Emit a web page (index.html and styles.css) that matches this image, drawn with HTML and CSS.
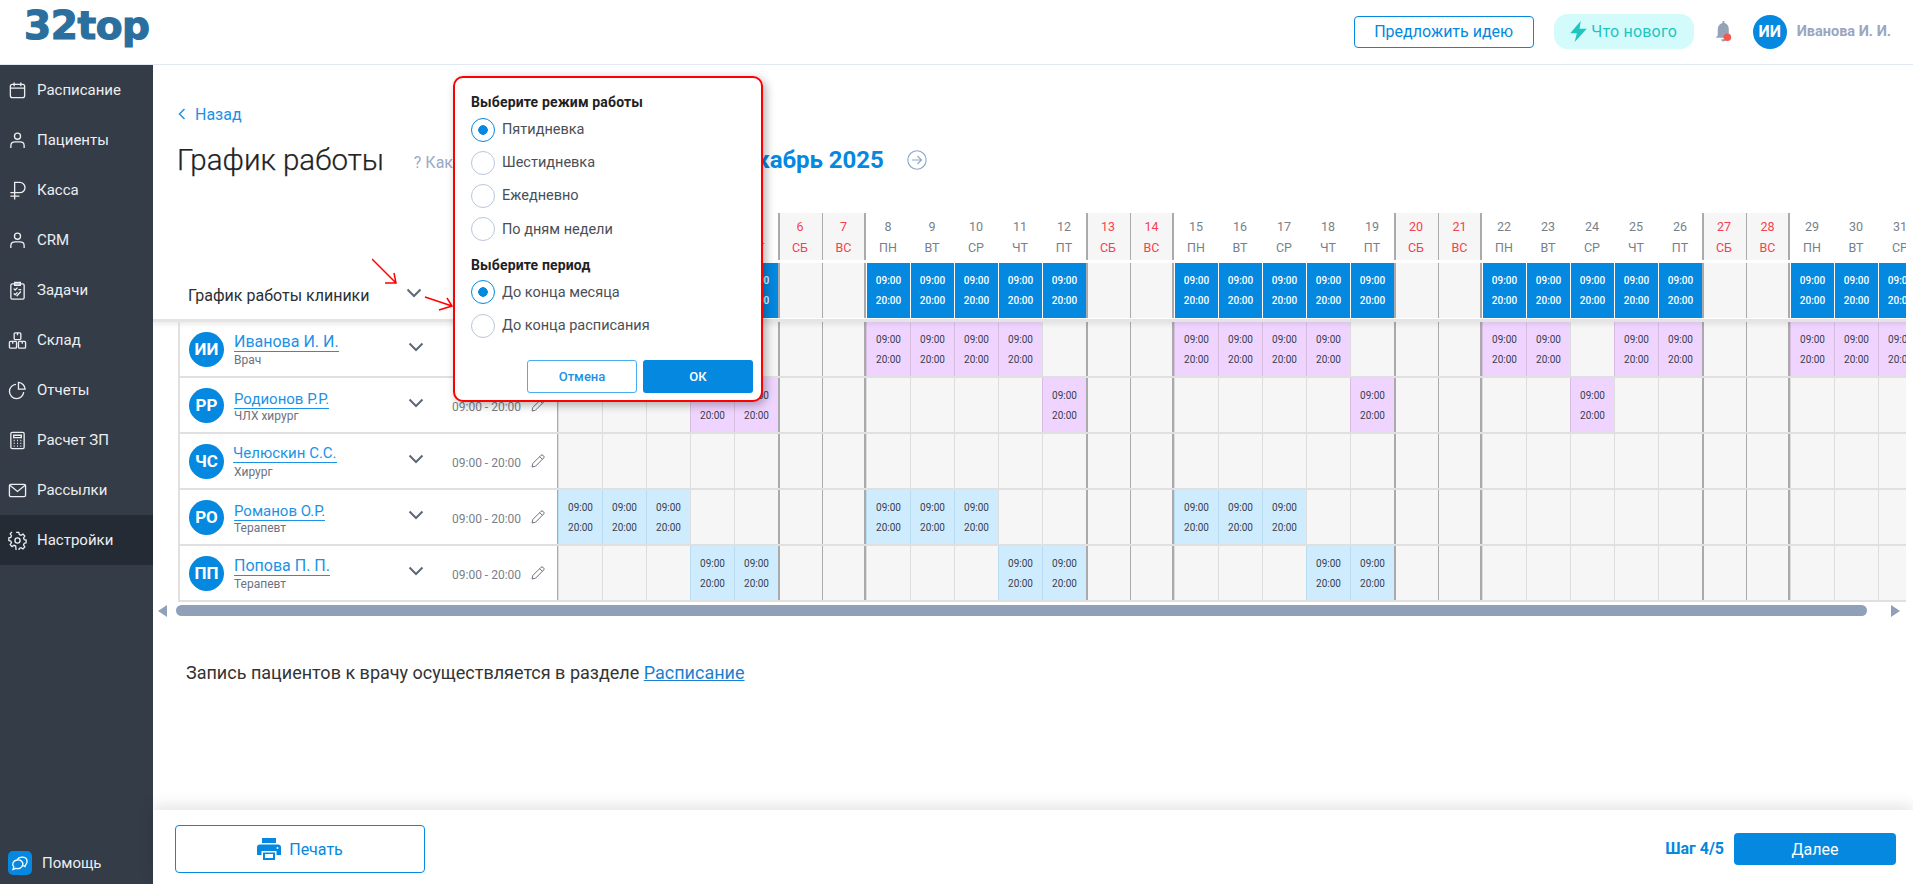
FILE: index.html
```html
<!DOCTYPE html>
<html lang="ru">
<head>
<meta charset="utf-8">
<title>График работы</title>
<link rel="stylesheet" href="styles.css">
</head>
<body>
<div class="page">
<header class="topbar">
  <div class="logo">32top</div>
  <div class="top-actions">
    <a class="idea">Предложить идею</a>
    <a class="news"><svg width="17" height="21" viewBox="0 0 15 19"><path d="M9.500 0 0 11h6l-2 8 11-12H8.500z" fill="#20c5c0"/></svg>Что нового</a>
    <span class="bell"><svg width="19" height="23" viewBox="0 0 18 24"><path d="M8 1h2v2c3 .7 4.500 3.300 4.500 6.500V16l2 2.500H1L3 16V9.500C3 6.300 5 3.700 8 3zM6.500 20h5a2.500 2.500 0 0 1-5 0z" fill="#94a3b8"/><circle cx="13" cy="18" r="4" fill="#f4574e"/></svg></span>
    <span class="top-avatar">ИИ</span>
    <span class="top-name">Иванова И. И.</span>
  </div>
</header>
<div class="body">
<nav class="sidebar">
  <a class="nav"><svg viewBox="0 0 20 20"><rect x="2.500" y="3.500" width="15" height="14" rx="2"/><path d="M2.500 7.500h15M6.500 1.500v4M13.500 1.500v4"/></svg>Расписание</a>
  <a class="nav"><svg viewBox="0 0 20 20"><circle cx="10" cy="5.500" r="3.200"/><path d="M3 18v-2.500C3 13 5 11.500 7.500 11.500h5c2.500 0 4.500 1.500 4.500 4V18"/></svg>Пациенты</a>
  <a class="nav"><svg viewBox="0 0 20 20"><path d="M7 19.500V1.500h5.500a5.200 5.200 0 0 1 0 10.800H2.500M2.500 16H12"/></svg>Касса</a>
  <a class="nav"><svg viewBox="0 0 20 20"><circle cx="10" cy="5.500" r="3.200"/><path d="M3 18v-2.500C3 13 5 11.500 7.500 11.500h5c2.500 0 4.500 1.500 4.500 4V18"/></svg>CRM</a>
  <a class="nav"><svg viewBox="0 0 20 20"><rect x="3" y="3" width="14" height="16" rx="1.500"/><path d="M7 1.500h6v3H7zM6 8l1.500 1.500L10 7M6 13l1.500 1.500L10 12M11 9h3M13.500 11 9 16"/></svg>Задачи</a>
  <a class="nav"><svg viewBox="0 0 20 20"><rect x="6.500" y="2" width="7" height="7" rx="1"/><rect x="1.500" y="11" width="7.500" height="7" rx="1"/><rect x="11" y="11" width="7.500" height="7" rx="1"/><path d="M10 2v2.500M5 11v2.500M15 11v2.500"/></svg>Склад</a>
  <a class="nav"><svg viewBox="0 0 20 20"><path d="M8.500 3.500a7.500 7.500 0 1 0 8 8M8.500 3.500"/><path d="M11 1.500a7.500 7.500 0 0 1 7 7h-7z"/></svg>Отчеты</a>
  <a class="nav"><svg viewBox="0 0 20 20"><rect x="3" y="1.500" width="14" height="17" rx="1.500"/><path d="M6 4.500h8v2.500H6zM6 10h1M9.500 10h1M13 10h1M6 13h1M9.500 13h1M13 13h1M6 16h1M9.500 16h1M13 16h1"/></svg>Расчет ЗП</a>
  <a class="nav"><svg viewBox="0 0 20 20"><rect x="1.500" y="3.500" width="17" height="13" rx="1.500"/><path d="m2 4.500 8 6.500 8-6.500"/></svg>Рассылки</a>
  <a class="nav active"><svg viewBox="0 0 20 20"><circle cx="10" cy="10" r="2.700"/><path d="M8.500 1.500h3l.5 2.500 1.800.8 2.200-1.400 2 2.200-1.400 2.100.8 1.800 2.100.5v3l-2.100.5-.8 1.800 1.400 2.100-2 2.200-2.200-1.400-1.800.8-.5 2.500h-3L8 16.500l-1.800-.8L4 17.100l-2-2.200 1.400-2.100-.8-1.800L.5 10.500v-3l2.100-.5.800-1.800L2 3.100l2-2.200" transform="translate(.4 0) scale(.96)"/></svg>Настройки</a>
  <a class="help"><span class="help-icon"><svg width="18" height="16" viewBox="0 0 18 16"><path d="M6.500 4.500C8 1.500 15 1 16 5.500c.5 2.500-1 4-1.500 4.500l-.5 1.500-2-1M2 14.500l.8-2.500C.5 9.500 2 5.500 6 5s6.500 2 5.700 5-4 4.300-6.700 3.300z"/></svg></span>Помощь</a>
</nav>
<main class="main">
<div class="content">
  <a class="back"><svg width="8" height="12" viewBox="0 0 8 12"><path d="M6.500 1 1.500 6l5 5"/></svg>Назад</a>
  <div class="title-row">
    <h1 class="title">График работы</h1>
    <span class="how">? Как это работает</span>
    <span class="month">Декабрь 2025</span>
    <svg class="next" width="20" height="20" viewBox="0 0 20 20"><circle cx="10" cy="10" r="9.200"/><path d="M5 10h9.500M10.500 6l4 4-4 4"/></svg>
  </div>
  <div class="table">
    <div class="row head">
      <div class="lead"></div>
      <div class="d"><b>1</b><b>ПН</b></div><div class="d"><b>2</b><b>ВТ</b></div><div class="d"><b>3</b><b>СР</b></div><div class="d"><b>4</b><b>ЧТ</b></div><div class="d"><b>5</b><b>ПТ</b></div><div class="d s"><b>6</b><b>СБ</b></div><div class="d u"><b>7</b><b>ВС</b></div>
      <div class="d"><b>8</b><b>ПН</b></div><div class="d"><b>9</b><b>ВТ</b></div><div class="d"><b>10</b><b>СР</b></div><div class="d"><b>11</b><b>ЧТ</b></div><div class="d"><b>12</b><b>ПТ</b></div><div class="d s"><b>13</b><b>СБ</b></div><div class="d u"><b>14</b><b>ВС</b></div>
      <div class="d"><b>15</b><b>ПН</b></div><div class="d"><b>16</b><b>ВТ</b></div><div class="d"><b>17</b><b>СР</b></div><div class="d"><b>18</b><b>ЧТ</b></div><div class="d"><b>19</b><b>ПТ</b></div><div class="d s"><b>20</b><b>СБ</b></div><div class="d u"><b>21</b><b>ВС</b></div>
      <div class="d"><b>22</b><b>ПН</b></div><div class="d"><b>23</b><b>ВТ</b></div><div class="d"><b>24</b><b>СР</b></div><div class="d"><b>25</b><b>ЧТ</b></div><div class="d"><b>26</b><b>ПТ</b></div><div class="d s"><b>27</b><b>СБ</b></div><div class="d u"><b>28</b><b>ВС</b></div>
      <div class="d"><b>29</b><b>ПН</b></div><div class="d"><b>30</b><b>ВТ</b></div><div class="d"><b>31</b><b>СР</b></div>
    </div>
    <div class="row clinic">
      <div class="lead"><span class="clinic-name">График работы клиники</span><svg class="chev" width="16" height="10" viewBox="0 0 16 10"><path d="m1.500 1.500 6.500 6.500 6.500-6.500"/></svg></div>
      <div class="c b"><i>09:00</i><i>20:00</i></div><div class="c b"><i>09:00</i><i>20:00</i></div><div class="c b"><i>09:00</i><i>20:00</i></div><div class="c b"><i>09:00</i><i>20:00</i></div><div class="c b"><i>09:00</i><i>20:00</i></div><div class="c s"></div><div class="c u"></div>
      <div class="c b"><i>09:00</i><i>20:00</i></div><div class="c b"><i>09:00</i><i>20:00</i></div><div class="c b"><i>09:00</i><i>20:00</i></div><div class="c b"><i>09:00</i><i>20:00</i></div><div class="c b"><i>09:00</i><i>20:00</i></div><div class="c s"></div><div class="c u"></div>
      <div class="c b"><i>09:00</i><i>20:00</i></div><div class="c b"><i>09:00</i><i>20:00</i></div><div class="c b"><i>09:00</i><i>20:00</i></div><div class="c b"><i>09:00</i><i>20:00</i></div><div class="c b"><i>09:00</i><i>20:00</i></div><div class="c s"></div><div class="c u"></div>
      <div class="c b"><i>09:00</i><i>20:00</i></div><div class="c b"><i>09:00</i><i>20:00</i></div><div class="c b"><i>09:00</i><i>20:00</i></div><div class="c b"><i>09:00</i><i>20:00</i></div><div class="c b"><i>09:00</i><i>20:00</i></div><div class="c s"></div><div class="c u"></div>
      <div class="c b"><i>09:00</i><i>20:00</i></div><div class="c b"><i>09:00</i><i>20:00</i></div><div class="c b"><i>09:00</i><i>20:00</i></div>
    </div>
    <div class="row staff">
      <div class="lead"><span class="avatar">ИИ</span><div class="who"><a class="name big">Иванова И. И.</a><span class="role">Врач</span></div><svg class="chev" width="16" height="10" viewBox="0 0 16 10"><path d="m1.500 1.500 6.500 6.500 6.500-6.500"/></svg></div>
      <div class="c p"><i>09:00</i><i>20:00</i></div><div class="c p"><i>09:00</i><i>20:00</i></div><div class="c p"><i>09:00</i><i>20:00</i></div><div class="c p"><i>09:00</i><i>20:00</i></div><div class="c"></div><div class="c s"></div><div class="c u"></div>
      <div class="c p"><i>09:00</i><i>20:00</i></div><div class="c p"><i>09:00</i><i>20:00</i></div><div class="c p"><i>09:00</i><i>20:00</i></div><div class="c p"><i>09:00</i><i>20:00</i></div><div class="c"></div><div class="c s"></div><div class="c u"></div>
      <div class="c p"><i>09:00</i><i>20:00</i></div><div class="c p"><i>09:00</i><i>20:00</i></div><div class="c p"><i>09:00</i><i>20:00</i></div><div class="c p"><i>09:00</i><i>20:00</i></div><div class="c"></div><div class="c s"></div><div class="c u"></div>
      <div class="c p"><i>09:00</i><i>20:00</i></div><div class="c p"><i>09:00</i><i>20:00</i></div><div class="c"></div><div class="c p"><i>09:00</i><i>20:00</i></div><div class="c p"><i>09:00</i><i>20:00</i></div><div class="c s"></div><div class="c u"></div>
      <div class="c p"><i>09:00</i><i>20:00</i></div><div class="c p"><i>09:00</i><i>20:00</i></div><div class="c p"><i>09:00</i><i>20:00</i></div>
    </div>
    <div class="row staff">
      <div class="lead"><span class="avatar">РР</span><div class="who"><a class="name">Родионов Р.Р.</a><span class="role">ЧЛХ хирург</span></div><svg class="chev" width="16" height="10" viewBox="0 0 16 10"><path d="m1.500 1.500 6.500 6.500 6.500-6.500"/></svg><span class="hours">09:00 - 20:00</span><svg class="pen" width="14" height="14" viewBox="0 0 14 14"><path d="M1 13l.8-3.500L10 1.300a1.400 1.400 0 0 1 2 0l.7.7a1.400 1.400 0 0 1 0 2L4.500 12.200zM8.700 2.600l2.700 2.700"/></svg></div>
      <div class="c"></div><div class="c"></div><div class="c"></div><div class="c p"><i>09:00</i><i>20:00</i></div><div class="c p"><i>09:00</i><i>20:00</i></div><div class="c s"></div><div class="c u"></div>
      <div class="c"></div><div class="c"></div><div class="c"></div><div class="c"></div><div class="c p"><i>09:00</i><i>20:00</i></div><div class="c s"></div><div class="c u"></div>
      <div class="c"></div><div class="c"></div><div class="c"></div><div class="c"></div><div class="c p"><i>09:00</i><i>20:00</i></div><div class="c s"></div><div class="c u"></div>
      <div class="c"></div><div class="c"></div><div class="c p"><i>09:00</i><i>20:00</i></div><div class="c"></div><div class="c"></div><div class="c s"></div><div class="c u"></div>
      <div class="c"></div><div class="c"></div><div class="c"></div>
    </div>
    <div class="row staff">
      <div class="lead"><span class="avatar">ЧС</span><div class="who"><a class="name shift">Челюскин С.С.</a><span class="role">Хирург</span></div><svg class="chev" width="16" height="10" viewBox="0 0 16 10"><path d="m1.500 1.500 6.500 6.500 6.500-6.500"/></svg><span class="hours">09:00 - 20:00</span><svg class="pen" width="14" height="14" viewBox="0 0 14 14"><path d="M1 13l.8-3.500L10 1.300a1.400 1.400 0 0 1 2 0l.7.7a1.400 1.400 0 0 1 0 2L4.500 12.200zM8.700 2.600l2.700 2.700"/></svg></div>
      <div class="c"></div><div class="c"></div><div class="c"></div><div class="c"></div><div class="c"></div><div class="c s"></div><div class="c u"></div>
      <div class="c"></div><div class="c"></div><div class="c"></div><div class="c"></div><div class="c"></div><div class="c s"></div><div class="c u"></div>
      <div class="c"></div><div class="c"></div><div class="c"></div><div class="c"></div><div class="c"></div><div class="c s"></div><div class="c u"></div>
      <div class="c"></div><div class="c"></div><div class="c"></div><div class="c"></div><div class="c"></div><div class="c s"></div><div class="c u"></div>
      <div class="c"></div><div class="c"></div><div class="c"></div>
    </div>
    <div class="row staff">
      <div class="lead"><span class="avatar">РО</span><div class="who"><a class="name">Романов О.Р.</a><span class="role">Терапевт</span></div><svg class="chev" width="16" height="10" viewBox="0 0 16 10"><path d="m1.500 1.500 6.500 6.500 6.500-6.500"/></svg><span class="hours">09:00 - 20:00</span><svg class="pen" width="14" height="14" viewBox="0 0 14 14"><path d="M1 13l.8-3.500L10 1.300a1.400 1.400 0 0 1 2 0l.7.7a1.400 1.400 0 0 1 0 2L4.500 12.200zM8.700 2.600l2.700 2.700"/></svg></div>
      <div class="c l"><i>09:00</i><i>20:00</i></div><div class="c l"><i>09:00</i><i>20:00</i></div><div class="c l"><i>09:00</i><i>20:00</i></div><div class="c"></div><div class="c"></div><div class="c s"></div><div class="c u"></div>
      <div class="c l"><i>09:00</i><i>20:00</i></div><div class="c l"><i>09:00</i><i>20:00</i></div><div class="c l"><i>09:00</i><i>20:00</i></div><div class="c"></div><div class="c"></div><div class="c s"></div><div class="c u"></div>
      <div class="c l"><i>09:00</i><i>20:00</i></div><div class="c l"><i>09:00</i><i>20:00</i></div><div class="c l"><i>09:00</i><i>20:00</i></div><div class="c"></div><div class="c"></div><div class="c s"></div><div class="c u"></div>
      <div class="c"></div><div class="c"></div><div class="c"></div><div class="c"></div><div class="c"></div><div class="c s"></div><div class="c u"></div>
      <div class="c"></div><div class="c"></div><div class="c"></div>
    </div>
    <div class="row staff">
      <div class="lead"><span class="avatar">ПП</span><div class="who"><a class="name big">Попова П. П.</a><span class="role">Терапевт</span></div><svg class="chev" width="16" height="10" viewBox="0 0 16 10"><path d="m1.500 1.500 6.500 6.500 6.500-6.500"/></svg><span class="hours">09:00 - 20:00</span><svg class="pen" width="14" height="14" viewBox="0 0 14 14"><path d="M1 13l.8-3.500L10 1.300a1.400 1.400 0 0 1 2 0l.7.7a1.400 1.400 0 0 1 0 2L4.500 12.200zM8.700 2.600l2.700 2.700"/></svg></div>
      <div class="c"></div><div class="c"></div><div class="c"></div><div class="c l"><i>09:00</i><i>20:00</i></div><div class="c l"><i>09:00</i><i>20:00</i></div><div class="c s"></div><div class="c u"></div>
      <div class="c"></div><div class="c"></div><div class="c"></div><div class="c l"><i>09:00</i><i>20:00</i></div><div class="c l"><i>09:00</i><i>20:00</i></div><div class="c s"></div><div class="c u"></div>
      <div class="c"></div><div class="c"></div><div class="c"></div><div class="c l"><i>09:00</i><i>20:00</i></div><div class="c l"><i>09:00</i><i>20:00</i></div><div class="c s"></div><div class="c u"></div>
      <div class="c"></div><div class="c"></div><div class="c"></div><div class="c"></div><div class="c"></div><div class="c s"></div><div class="c u"></div>
      <div class="c"></div><div class="c"></div><div class="c"></div>
    </div>
  </div>
  <div class="scroll">
    <span class="arrow left"></span>
    <span class="thumb"></span>
    <span class="arrow right"></span>
  </div>
  <p class="note">Запись пациентов к врачу осуществляется в разделе <a>Расписание</a></p>
</div>
<footer class="footer">
  <a class="print"><svg width="24" height="22" viewBox="0 0 24 22"><path d="M5 0h14v5H5zM3 6.500h18a3 3 0 0 1 3 3V17h-4.500v-4h-15v4H0V9.500a3 3 0 0 1 3-3zM6 14.500h12V22H6z" fill="#0488e0"/><rect x="8" y="16" width="8" height="4" fill="#fff"/><circle cx="20.500" cy="10" r="1" fill="#fff"/></svg>Печать</a>
  <span class="step">Шаг 4/5</span>
  <a class="next-btn">Далее</a>
</footer>
</main>
</div>
<section class="popup">
  <h3 class="pop-title">Выберите режим работы</h3>
  <label class="radio on">Пятидневка</label>
  <label class="radio">Шестидневка</label>
  <label class="radio">Ежедневно</label>
  <label class="radio">По дням недели</label>
  <h3 class="pop-title second">Выберите период</h3>
  <label class="radio on">До конца месяца</label>
  <label class="radio">До конца расписания</label>
  <div class="pop-btns"><a class="cancel">Отмена</a><a class="ok">ОК</a></div>
</section>
<svg class="marks" width="100" height="60" viewBox="0 0 100 60"><path d="M0 1 24 25M22 15l2 10-11 0M53 39l27 9M75 40l5 8-13 4"/></svg>
</div>
</body>
</html>
```

FILE: styles.css
```css
* { box-sizing: border-box; }
html, body { margin: 0; height: 100%; }
body { font-family: Roboto, "Liberation Sans", sans-serif; color: #222; background: #fff; overflow: hidden; }
.page { position: relative; display: flex; flex-direction: column; height: 884px; width: 1913px; overflow: hidden; }
a { text-decoration: none; }

.topbar { height: 65px; flex: none; display: flex; justify-content: space-between; border-bottom: 1.5px solid #e0e8f4; background: #fff; }
.logo { font: bold 39px/1 "DejaVu Sans", sans-serif; color: #2b6f9f; margin: 6px 0 0 24px; letter-spacing: -.4px; -webkit-text-stroke: 1.2px #2b6f9f; }
.top-actions { display: flex; align-items: center; height: 63px; padding-right: 22px; }
.idea { width: 180px; height: 32px; border: 1px solid #0488e0; border-radius: 4px; color: #0488e0; font-size: 16px; display: flex; align-items: center; justify-content: center; }
.news { width: 140px; height: 35px; margin-left: 20px; border-radius: 14px; background: #d4fbfb; color: #20c5c0; font-size: 16px; letter-spacing: .2px; display: flex; align-items: center; justify-content: center; gap: 4px; }
.bell { margin-left: 20px; width: 19px; height: 23px; display: block; }
.bell svg { display: block; }
.top-avatar { margin-left: 20px; width: 34px; height: 34px; border-radius: 50%; background: #0488e0; color: #fff; font-size: 16px; font-weight: 700; display: flex; align-items: center; justify-content: center; }
.top-name { margin-left: 10px; font-size: 14.500px; font-weight: 700; color: #9aa6bd; white-space: nowrap; }

.body { flex: 1; display: flex; min-height: 0; }
.sidebar { width: 153px; flex: none; background: #343c47; display: flex; flex-direction: column; }
.nav { height: 50px; flex: none; display: flex; align-items: center; gap: 10px; padding-left: 8px; color: #eceef1; font-size: 15px; }
.nav svg { width: 19px; height: 19px; fill: none; stroke: #eceef1; stroke-width: 1.400; flex: none; }
.nav.active { background: #252b35; }
.help { margin-top: auto; height: 42px; padding-left: 8px; display: flex; align-items: center; gap: 10px; color: #eceef1; font-size: 15px; }
.help-icon { width: 24px; height: 24px; border-radius: 5px; background: #0488e0; display: flex; align-items: center; justify-content: center; }
.help-icon svg { fill: none; stroke: #fff; stroke-width: 1.300; }

.main { flex: 1; min-width: 0; display: flex; flex-direction: column; }
.content { flex: 1; min-height: 0; padding-top: 39px; }
.back { display: flex; align-items: center; gap: 9px; height: 20px; margin-left: 25px; color: #1c92e6; font-size: 16px; }
.back svg { fill: none; stroke: #1c92e6; stroke-width: 1.500; }
.title-row { display: flex; align-items: center; height: 40px; margin: 16px 0 33px 24px; }
.title { margin: 0; font-size: 29.500px; font-weight: 300; line-height: 40px; color: #222; white-space: nowrap; -webkit-text-stroke: .25px #222; }
.how { margin-left: 30px; width: 260px; padding-top: 4px; font-size: 16px; color: #9aa9c4; white-space: nowrap; }
.month { width: 210px; font-size: 24px; font-weight: 700; color: #0488e0; white-space: nowrap; text-align: right; }
.next { margin-left: 23px; fill: none; stroke: #8fa7c8; stroke-width: 1.100; }

.table { margin-right: 7px; padding-left: 25px; overflow: hidden; }
.row { display: flex; width: 1743px; }
.lead { width: 380px; flex: none; display: flex; align-items: center; position: relative; }
.head { height: 47px; margin-bottom: 3px; }
.d { width: 44px; flex: none; display: flex; flex-direction: column; align-items: center; justify-content: center; gap: 6px; color: #7a7f87; font-size: 12.500px; }
.d b { font-weight: 400; line-height: 15px; }
.d.s, .d.u { background: #f6f6f6; color: #f6404f; }
.d.s { border-left: 2px solid #aaa; padding-right: 2px; }
.d.u { border-left: 1px solid #aaa; border-right: 2px solid #aaa; }
.clinic { height: 59px; margin-left: -25px; padding-left: 25px; width: 1768px; border-bottom: 3px solid #e4e4e4; box-shadow: 0 3px 4px rgba(0,0,0,.07); position: relative; }
.clinic .lead { padding-top: 8px; }
.clinic .chev { margin-top: -3px; }
.clinic-name { margin-left: 10px; font-size: 16px; color: #2b2f36; white-space: nowrap; }
.chev { position: absolute; left: 228px; top: 50%; margin-top: -7px; fill: none; stroke: #5f6977; stroke-width: 2; }
.staff { height: 56px; border-bottom: 2px solid #e0e0e0; }
.staff .lead { border-left: 2px solid #e0e0e0; border-right: 1px solid #aaa; padding-left: 9px; }
.avatar { width: 35px; height: 35px; flex: none; border-radius: 50%; background: #0488e0; color: #fff; font-size: 17px; font-weight: 700; display: flex; align-items: center; justify-content: center; }
.who { display: flex; flex-direction: column; margin-left: 10px; width: 170px; align-items: flex-start; padding-top: 1px; }
.name { margin-top: 2px; font-size: 15px; line-height: 18px; color: #1c92e6; border-bottom: 1px solid #1c92e6; white-space: nowrap; }
.name.big { margin: 1px 0 1px; font-size: 16px; }
.name.shift { margin: 0 0 2px -1px; }
.role { font-size: 12px; line-height: 15px; color: #6b7280; }
.hours { position: absolute; left: 272px; top: 21px; font-size: 12px; line-height: 16px; color: #7a7f87; white-space: nowrap; }
.pen { position: absolute; left: 351px; top: 20px; fill: none; stroke: #6b7280; stroke-width: 1; }
.c { width: 44px; flex: none; background: #f6f6f6; border-left: 1px solid #ddd; display: flex; flex-direction: column; align-items: center; justify-content: center; gap: 5px; }
.c i { font-style: normal; font-size: 10px; line-height: 15px; }
.c.s { border-left: 2px solid #aaa; }
.c.u { border-left: 1px solid #aaa; border-right: 2px solid #aaa; }
.c.b { background: #0488e0; color: #fff; border-left-color: #fff; font-weight: 500; }
.clinic .c { height: 55px; }
.c.p { background: #efd4ff; color: #3a3f4a; border-left: 1px solid #d9bde0; }
.c.l { background: #cfecff; color: #3a3f4a; border-left: 1px solid #b9dcf0; }

.scroll { display: flex; align-items: center; height: 11px; margin-top: 3px; }
.arrow { width: 0; height: 0; border-top: 6px solid transparent; border-bottom: 6px solid transparent; flex: none; }
.arrow.left { margin-left: 5px; border-right: 9px solid #8fa0b8; }
.thumb { margin-left: 9px; width: 1691px; height: 11px; background: #8fa0b8; border-radius: 6px; flex: none; }
.arrow.right { margin-left: 24px; border-left: 9px solid #8fa0b8; }
.note { margin: 46px 0 0 33px; font-size: 18px; line-height: 22px; color: #333; }
.note a { color: #1c7fd0; text-decoration: underline; }

.footer { flex: none; height: 74px; display: flex; align-items: center; padding: 0 17px 0 22px; background: #fff; box-shadow: 0 -5px 14px rgba(0,0,0,.1); position: relative; }
.print { width: 250px; height: 48px; margin-top: 4px; border: 1px solid #0488e0; border-radius: 4px; color: #0488e0; font-size: 16px; display: flex; align-items: center; justify-content: center; gap: 8px; }
.step { margin-left: auto; margin-top: 2px; font-size: 16px; font-weight: 700; color: #0488e0; }
.next-btn { width: 162px; height: 32px; margin-left: 10px; margin-top: 4px; border-radius: 4px; background: #0488e0; color: #fff; font-size: 16px; display: flex; align-items: center; justify-content: center; }

.popup { position: absolute; left: 453px; top: 76px; width: 310px; height: 326px; background: #fff; border: 2px solid #f00; border-radius: 10px; box-shadow: 3px 3px 10px rgba(0,0,0,.3); padding: 16px 8px 0 16px; }
.pop-title { margin: 0 0 2px; font-size: 14px; font-weight: 700; line-height: 17px; color: #222; letter-spacing: .15px; }
.pop-title.second { margin-top: 11px; }
.radio { display: flex; align-items: center; gap: 7px; height: 33.200px; font-size: 14.500px; color: #4a4f57; }
.radio::before { content: ""; width: 22px; height: 22px; flex: none; border-radius: 50%; border: 1.500px solid #b9c6da; background: #fff; }
.radio.on::before { border-color: #0488e0; background: radial-gradient(circle, #0488e0 0 4.500px, #fff 5px); }
.pop-btns { display: flex; gap: 6px; margin: 18px 0 0 56px; }
.cancel, .ok { width: 110px; height: 33px; border-radius: 3px; font-size: 13px; display: flex; align-items: center; justify-content: center; }
.cancel { border: 1px solid #49aef0; color: #1c92e6; font-weight: 500; }
.ok { background: #0488e0; color: #fff; font-weight: 500; }
.marks { position: absolute; left: 372px; top: 258px; fill: none; stroke: #f00; stroke-width: 1.500; }
```
